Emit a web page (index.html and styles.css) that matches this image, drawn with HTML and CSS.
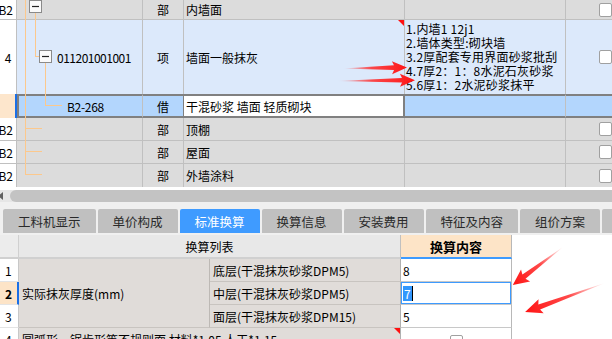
FILE: index.html
```html
<!DOCTYPE html>
<html lang="zh-CN">
<head>
<meta charset="utf-8">
<link rel="stylesheet" href="styles.css">
</head>
<body>
<div class="page">
  <div class="grid-top">
    <div class="row h20 gray">
      <div class="c c0 rn">B2</div>
      <div class="c c1"></div>
      <div class="c c2">部</div>
      <div class="c c3">内墙面</div>
      <div class="c c4"></div>
      <div class="c c5"><span class="cb"></span></div>
    </div>
    <div class="row h74 blue">
      <div class="c c0">4</div>
      <div class="c c1 code">011201001001</div>
      <div class="c c2">项</div>
      <div class="c c3 flag">墙面一般抹灰</div>
      <div class="c c4 feat">
        <div class="fl">1.内墙1 12j1</div>
        <div class="fl">2.墙体类型:砌块墙</div>
        <div class="fl">3.2厚配套专用界面砂浆批刮</div>
        <div class="fl">4.7厚2：1：8水泥石灰砂浆</div>
        <div class="fl">5.6厚1：2水泥砂浆抹平</div>
      </div>
      <div class="c c5"><span class="cb"></span></div>
    </div>
    <div class="row sel">
      <div class="c c0"></div>
      <div class="c c1 sub">B2-268</div>
      <div class="c c2">借</div>
      <div class="c c3 edit">干混砂浆 墙面 轻质砌块</div>
      <div class="c c4"></div>
      <div class="c c5"></div>
    </div>
    <div class="row h23 gray">
      <div class="c c0 rn">B2</div>
      <div class="c c1"></div>
      <div class="c c2">部</div>
      <div class="c c3">顶棚</div>
      <div class="c c4"></div>
      <div class="c c5"><span class="cb"></span></div>
    </div>
    <div class="row h23 gray">
      <div class="c c0 rn">B2</div>
      <div class="c c1"></div>
      <div class="c c2">部</div>
      <div class="c c3">屋面</div>
      <div class="c c4"></div>
      <div class="c c5"><span class="cb"></span></div>
    </div>
    <div class="row h23 gray last">
      <div class="c c0 rn">B2</div>
      <div class="c c1"></div>
      <div class="c c2">部</div>
      <div class="c c3">外墙涂料</div>
      <div class="c c4"></div>
      <div class="c c5"><span class="cb"></span></div>
    </div>
    <svg class="tree" width="142" height="187" viewBox="0 0 142 187">
      <g stroke="#fcc88c" stroke-width="1" fill="none">
        <line x1="25.5" y1="0" x2="25.5" y2="175"/>
        <line x1="35.5" y1="13" x2="35.5" y2="56.5"/>
        <line x1="35" y1="56.5" x2="40" y2="56.5"/>
        <line x1="45.5" y1="62" x2="45.5" y2="105.5"/>
        <line x1="45" y1="105.5" x2="62" y2="105.5"/>
        <line x1="25" y1="128.5" x2="42" y2="128.5"/>
        <line x1="25" y1="151.5" x2="42" y2="151.5"/>
        <line x1="25" y1="174.5" x2="42" y2="174.5"/>
      </g>
      <g stroke="#8a8a8a" fill="#fafafa">
        <rect x="29.5" y="0.5" width="12" height="12"/>
        <rect x="39.5" y="50.5" width="12" height="12"/>
      </g>
      <g stroke="#222" stroke-width="1.2">
        <line x1="32" y1="6.5" x2="39" y2="6.5"/>
        <line x1="42" y1="56.5" x2="49" y2="56.5"/>
      </g>
    </svg>
  </div>

  <div class="hscroll">
    <div class="track">
      <span class="sarrow"></span>
      <span class="thumb"></span>
    </div>
  </div>

  <div class="tabbar">
    <div class="tab">工料机显示</div>
    <div class="tab">单价构成</div>
    <div class="tab active">标准换算</div>
    <div class="tab">换算信息</div>
    <div class="tab">安装费用</div>
    <div class="tab">特征及内容</div>
    <div class="tab">组价方案</div>
    <div class="tab">工程量明细</div>
  </div>

  <div class="btable">
    <div class="hn"></div>
    <div class="hl">换算列表</div>
    <div class="hv">换算内容</div>
    <div class="hx"></div>

    <div class="n">1</div>
    <div class="lab">实际抹灰厚度(mm)</div>
    <div class="s">底层(干混抹灰砂浆DPM5)</div>
    <div class="v">8</div>
    <div class="x"></div>

    <div class="n nsel">2</div>
    <div class="s">中层(干混抹灰砂浆DPM5)</div>
    <div class="v vfocus"><span class="selt">7</span><span class="caret"></span></div>
    <div class="x"></div>

    <div class="n">3</div>
    <div class="s">面层(干混抹灰砂浆DPM15)</div>
    <div class="v">5</div>
    <div class="x"></div>

    <div class="n">4</div>
    <div class="long">圆弧形、锯齿形等不规则面 材料*1.05 人工*1.15</div>
    <div class="v vcb"><span class="cb"></span></div>
    <div class="x"></div>
  </div>

  <svg class="arrows" width="612" height="339" viewBox="0 0 612 339">
    <defs>
      <linearGradient id="ag" x1="0" y1="0" x2="1" y2="0">
        <stop offset="0" stop-color="#ff2a2a" stop-opacity="0"/>
        <stop offset="0.45" stop-color="#ff2a2a" stop-opacity="0.85"/>
        <stop offset="1" stop-color="#ff1414"/>
      </linearGradient>
    </defs>
    <g transform="translate(343 68.5) rotate(-1)">
      <polygon fill="url(#ag)" points="0,0 51,-2.3 49,-6.5 64,0 49,6.5 51,2.3"/>
    </g>
    <g transform="translate(337 81) rotate(-0.6)">
      <polygon fill="url(#ag)" points="0,0 65,-2.3 63,-6.5 78,0 63,6.5 65,2.3"/>
    </g>
    <g transform="translate(563 247) rotate(142.8)">
      <polygon fill="url(#ag)" points="0,0 49,-2.6 47,-7.5 63,0 47,7.5 49,2.6"/>
    </g>
    <g transform="translate(605 283) rotate(160)">
      <polygon fill="url(#ag)" points="0,0 70,-2.6 68,-7.5 85,0 68,7.5 70,2.6"/>
    </g>
  </svg>
</div>
</body>
</html>
```

FILE: styles.css
```css
* { box-sizing: border-box; }
html, body { margin: 0; padding: 0; }
body {
  width: 612px;
  height: 339px;
  overflow: hidden;
  background: #fff;
  font-family: "Noto Sans CJK SC", "Noto Sans", sans-serif;
  font-size: 12px;
  color: #000;
}
.page { position: relative; width: 612px; height: 339px; overflow: hidden; }

/* ---------- top grid ---------- */
.grid-top { position: relative; }
.row {
  display: grid;
  grid-template-columns: 17px 126px 41px 221px 161px 1fr;
}
.row.h20 { height: 20px; }
.row.h74 { height: 74px; }
.row.h23 { height: 23px; }
.row.sel { height: 24px; }

.c {
  display: flex;
  align-items: center;
  border-right: 1px solid #c0c0c0;
  border-bottom: 1px solid #c0c0c0;
  white-space: nowrap;
  overflow: hidden;
}
.row.h74 .c { border-bottom: none; }
.row.last .c { border-bottom: none; }
.c0 { background: #fff; justify-content: center; font-size: 12px; }
.c0.rn { justify-content: flex-end; padding-right: 3px; }
.c2 { justify-content: center; }
.c3 { padding-left: 2px; }
.c5 { padding-left: 33px; border-right: none; }

.gray .c1, .gray .c2, .gray .c3, .gray .c4, .gray .c5 { background: #dcdcdc; }
.blue .c1, .blue .c2, .blue .c3, .blue .c4, .blue .c5 { background: #dce9fb; }

.code { padding-left: 40px; letter-spacing: -0.5px; }
.flag { position: relative; }
.flag::after {
  content: "";
  position: absolute;
  top: 0;
  right: 0;
  width: 0;
  height: 0;
  border-top: 6px solid #ff1010;
  border-left: 6px solid transparent;
}
.feat {
  display: flex;
  flex-direction: column;
  align-items: flex-start;
  justify-content: flex-start;
  padding: 2px 0 0 1px;
}
.fl { height: 14px; line-height: 14px; font-size: 12px; letter-spacing: 0.2px; }

.sel .c { border-top: 2px solid #808080; border-bottom: 2px solid #808080; background: #b3d6fd; }
.sel .c0 {
  border-top: none;
  border-bottom: none;
  background: #fde6cc;
  border-right: 2px solid #1b6fe6;
}
.sel .c1 { border-left: 2px solid #808080; }
.sel .c2 { border-right-color: #808080; }
.sel .c3.edit { background: #fff; border-right: 2px solid #808080; }
.sub { padding-left: 48px; letter-spacing: -0.3px; }

.cb {
  display: inline-block;
  width: 14px;
  height: 14px;
  background: #fff;
  border: 1px solid #a0a0a0;
  border-radius: 2px;
}

.tree { position: absolute; left: 0; top: 0; pointer-events: none; }

/* ---------- horizontal scrollbar ---------- */
.hscroll { height: 15px; padding-top: 3px; background: #fff; }
.track { display: flex; height: 12px; background: #e6e6e6; }
.sarrow {
  width: 10px;
  position: relative;
}
.sarrow::before {
  content: "";
  position: absolute;
  left: -2px;
  top: 2px;
  border-right: 5px solid #606060;
  border-top: 4px solid transparent;
  border-bottom: 4px solid transparent;
}
.thumb { flex: 1; background: #c3c3c3; border-radius: 6px 0 0 6px; }

/* ---------- tabs ---------- */
.tabbar {
  display: flex;
  gap: 2px;
  padding: 7px 0 2px 3px;
  background: #f0f0f0;
  white-space: nowrap;
  overflow: hidden;
}
.tab {
  flex: none;
  height: 24px;
  display: flex;
  align-items: center;
  padding: 0 15px;
  background: #c0c0c0;
  color: #2a2a2a;
  font-size: 12.5px;
  border-radius: 2px 2px 0 0;
}
.tab.active { background: #3f9bff; color: #fff; }

/* ---------- bottom table ---------- */
.btable {
  display: grid;
  grid-template-columns: 19px 191px 191px 111px 1fr;
  grid-template-rows: 24px 23px 23px 23px 23px;
  background: #fff;
}
.btable > div { display: flex; align-items: center; white-space: nowrap; overflow: hidden; }

.hn { background: #ececec; border-right: 1px solid #d0d0d0; border-bottom: 2px solid #d0d0d0; }
.hl {
  grid-column: 2 / 4;
  justify-content: center;
  background: #e8e8e8;
  border-right: 1px solid #c0c0c0;
  border-bottom: 2px solid #d0d0d0;
}
.hv {
  justify-content: center;
  background: #fde4c7;
  font-weight: bold;
  font-size: 13px;
  border-right: 1px solid #b8b8b8;
  border-bottom: 2px solid #3d9bff;
}
.hx { background: #fff; }

.n {
  padding-left: 5px;
  background: #fff;
  border-right: 1px solid #c8c8c8;
  border-bottom: 1px solid #e4e4e4;
}
.n.nsel { background: #fde4c7; border-right: 2px solid #1b6fe6; font-weight: bold; }

.lab {
  grid-row: 2 / span 3;
  grid-column: 2;
  padding-left: 3px;
  background: #e0dcd9;
  border-right: 1px solid #bdb9b5;
  border-bottom: 1px solid #c8c4c0;
}
.s {
  padding-left: 3px;
  background: #e0dcd9;
  border-right: 1px solid #b0b0b0;
  border-bottom: 1px solid #c8c4c0;
}
.v {
  padding-left: 2px;
  background: #fff;
  border-right: 1px solid #b8b8b8;
  border-bottom: 1px solid #c8c8c8;
}
.vfocus { box-shadow: inset 0 0 0 1px #3d9bff; }
.selt { background: #3297fd; color: #fff; padding: 0 1px; line-height: 15px; }
.caret { display: inline-block; width: 1px; height: 15px; background: #000; }
.vcb { justify-content: center; align-items: flex-start; padding-top: 4px; padding-left: 0; }
.vcb .cb { width: 13px; height: 13px; }
.x { background: #fff; }

.long {
  grid-column: 2 / 4;
  position: relative;
  padding-left: 3px;
  background: #e0dcd9;
  border-right: 1px solid #b0b0b0;
}
.long::after {
  content: "";
  position: absolute;
  top: 0;
  right: 0;
  width: 0;
  height: 0;
  border-top: 6px solid #ff1010;
  border-left: 6px solid transparent;
}

.arrows { position: absolute; left: 0; top: 0; pointer-events: none; }
```
